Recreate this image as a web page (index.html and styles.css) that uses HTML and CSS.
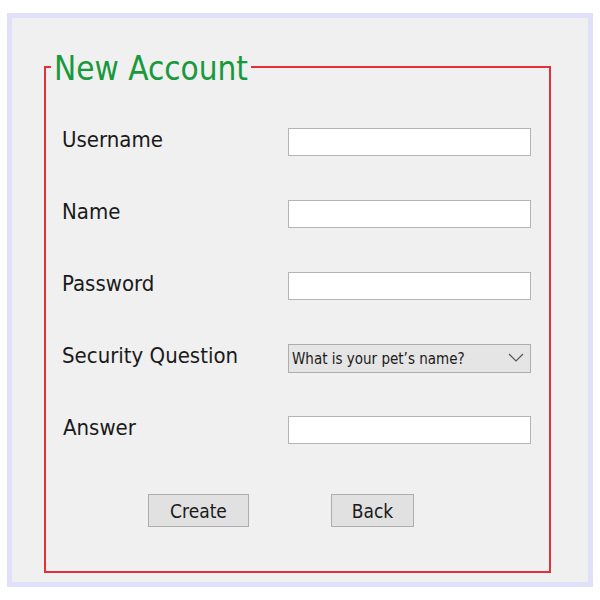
FILE: index.html
```html
<!DOCTYPE html>
<html>
<head>
<meta charset="utf-8">
<link rel="stylesheet" href="styles.css">
</head>
<body>
<div class="frame">
  <fieldset class="panel">
    <legend class="title">New Account</legend>
    <div class="form">
      <label class="lbl">Username</label>
      <input class="field" type="text">
      <label class="lbl">Name</label>
      <input class="field" type="text">
      <label class="lbl">Password</label>
      <input class="field" type="password">
      <label class="lbl">Security Question</label>
      <div class="select-wrap">
        <select class="select">
          <option>What is your pet’s name?</option>
        </select>
        <svg class="chev" width="16" height="9" viewBox="0 0 16 9"><path d="M1 1 L8 8 L15 1" fill="none" stroke="#555" stroke-width="1.2"/></svg>
      </div>
      <label class="lbl lbl-answer">Answer</label>
      <input class="field" type="text">
    </div>
    <div class="buttons">
      <button class="btn btn-create">Create</button>
      <button class="btn btn-back">Back</button>
    </div>
  </fieldset>
</div>
</body>
</html>
```
FILE: styles.css
```css
html, body {
  margin: 0;
  padding: 0;
  background: #ffffff;
}
body {
  font-family: "DejaVu Sans Condensed", "DejaVu Sans", sans-serif;
  font-stretch: condensed;
}
.frame {
  box-sizing: border-box;
  margin: 13px 7px 0 7px;
  width: 586px;
  height: 574px;
  border: 5px solid #e0e0fa;
  background: #f0f0f0;
  padding: 30px 37px 9px 32px;
  display: flex;
  flex-direction: column;
}
.panel {
  flex: 1;
  margin: 0;
  border: 2px solid #e3313a;
  padding: 0 0 0 5px;
  min-width: 0;
  display: flex;
  flex-direction: column;
}
.title {
  font-size: 33px;
  line-height: 32px;
  color: #17993c;
  padding: 5px 3px 0 3px;
}
.form {
  margin-top: 43px;
  padding-left: 11px;
  display: grid;
  grid-template-columns: 226px 243px;
  grid-auto-rows: 28px;
  row-gap: 44px;
}
.lbl {
  font-size: 22px;
  line-height: 28px;
  color: #1a1a1a;
  margin-top: -2px;
  white-space: nowrap;
}
.lbl-answer {
  padding-left: 1px;
}
.field {
  box-sizing: border-box;
  width: 243px;
  height: 28px;
  margin: 0;
  border: 1.5px solid #b4b4b4;
  background: #ffffff;
  outline: none;
}
.select-wrap {
  position: relative;
  width: 243px;
  height: 29px;
}
.select {
  appearance: none;
  -webkit-appearance: none;
  box-sizing: border-box;
  width: 243px;
  height: 29px;
  margin: 0;
  border: 1.5px solid #adadad;
  border-radius: 0;
  background: #e5e5e5;
  font-family: "DejaVu Sans Condensed", "DejaVu Sans", sans-serif;
  font-stretch: condensed;
  font-size: 15px;
  color: #1a1a1a;
  padding: 0 0 0 3px;
}
.chev {
  position: absolute;
  right: 7px;
  top: 9px;
}
.buttons {
  display: flex;
  gap: 82px;
  margin-top: 50px;
  padding-left: 97px;
}
.btn {
  box-sizing: border-box;
  height: 33px;
  margin: 0;
  border: 1.5px solid #adadad;
  border-radius: 0;
  background: #e1e1e1;
  font-family: "DejaVu Sans Condensed", "DejaVu Sans", sans-serif;
  font-stretch: condensed;
  font-size: 19px;
  color: #1a1a1a;
  padding: 0;
}
.btn-create {
  width: 101px;
}
.btn-back {
  width: 83px;
}
```
